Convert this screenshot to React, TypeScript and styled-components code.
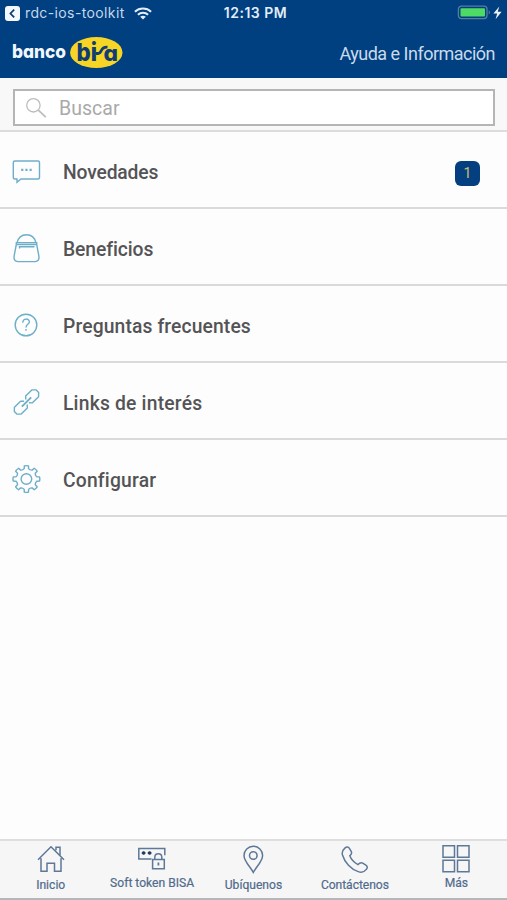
import React from "react";
import styled, { createGlobalStyle } from "styled-components";

const Global = createGlobalStyle`
  * { box-sizing: border-box; }
  body { margin: 0; background: #fdfdfd; font-family: Roboto, sans-serif; }
`;

const Screen = styled.div`
  width: 507px;
  height: 900px;
  display: flex;
  flex-direction: column;
  background: #fdfdfd;
  overflow: hidden;
`;

const Header = styled.header`
  height: 78px;
  background: #003f80;
  color: #e3edf7;
`;

const StatusBar = styled.div`
  height: 26px;
  display: grid;
  grid-template-columns: 1fr auto 1fr;
  align-items: center;
  padding: 0 1px 0 5px;
  font-family: Inter, sans-serif;
  font-size: 14px;
`;

const StatusLeft = styled.div`
  display: flex;
  align-items: center;
  color: #c5d8ea;
  letter-spacing: 0.38px;
`;

const BackApp = styled.span`
  margin: -2px 9px 0 5px;
`;

const Clock = styled.span`
  margin-top: -2px;
  font-weight: 600;
  font-size: 14px;
  letter-spacing: 0.5px;
`;

const StatusRight = styled.div`
  display: flex;
  justify-content: flex-end;
  padding-right: 3px;
`;

const TitleBar = styled.div`
  height: 52px;
  display: flex;
  justify-content: space-between;
  align-items: flex-start;
  padding: 9px 12px 0 12px;
`;

const Title = styled.h1`
  margin: 8px 0 0;
  font-size: 18px;
  line-height: 22px;
  font-weight: 400;
  letter-spacing: -0.51px;
  color: #c9dbeb;
  white-space: nowrap;
`;

const SearchArea = styled.div`
  height: 54px;
  padding: 11px 12px 0 13px;
  background: #f8f8f8;
  border-bottom: 2px solid #dcdcdc;
`;

const SearchField = styled.div`
  height: 37px;
  display: flex;
  align-items: center;
  gap: 11px;
  padding: 1px 0 0 10px;
  border: 2px solid #b5b5b5;
  background: #fff;
  color: #a9a9a9;
  font-size: 19.5px;
  letter-spacing: 0.05px;
`;

const List = styled.ul`
  list-style: none;
  margin: 0;
  padding: 0;
  flex: 1;
`;

const Row = styled.li`
  height: 77px;
  display: flex;
  align-items: center;
  padding: 3px 27px 0 12px;
  border-bottom: 2px solid #dadada;
`;

const RowIcon = styled.span`
  width: 51px;
  height: 30px;
  flex: none;
`;

const RowLabel = styled.span<{ $spacing: number }>`
  flex: 1;
  padding-top: 3px;
  font-size: 19.3px;
  line-height: 24px;
  font-weight: 500;
  letter-spacing: ${(p) => p.$spacing}px;
  color: #545456;
`;

const Badge = styled.span`
  width: 25px;
  height: 25px;
  display: flex;
  align-items: center;
  justify-content: center;
  border-radius: 6px;
  background: #04407f;
  color: #c5c27a;
  font-size: 14px;
  margin-top: 4px;
`;

const TabBar = styled.nav`
  height: 61px;
  flex: none;
  display: grid;
  grid-template-columns: repeat(5, 1fr);
  padding-top: 3px;
  background: #f6f6f6;
  border-top: 2px solid #dedede;
  border-bottom: 2px solid #b5b7b9;
`;

const Tab = styled.div`
  display: flex;
  flex-direction: column;
  align-items: center;
`;

const TabLabel = styled.span<{ $raise?: boolean; $spacing: number }>`
  margin-top: ${(p) => (p.$raise ? 2 : 4)}px;
  font-size: 12.1px;
  line-height: 14px;
  letter-spacing: ${(p) => p.$spacing}px;
  color: #506b8c;
  -webkit-text-stroke: 0.2px #506b8c;
  white-space: nowrap;
`;

const LogoText = styled.text`
  font-family: Inter, sans-serif;
  font-weight: 800;
  font-feature-settings: "cv11";
`;

const Logo = () => (
  <svg width="112" height="34" viewBox="0 0 112 34" aria-label="banco bisa">
    <LogoText x="0" y="23" fill="#f2f7fc" fontSize="18.5" textLength="54" lengthAdjust="spacingAndGlyphs">banco</LogoText>
    <ellipse cx="84.3" cy="17.5" rx="26.2" ry="15.5" fill="#f7d525" />
    <LogoText x="64.5" y="25.5" fill="#103e74" fontSize="25" textLength="20.5" lengthAdjust="spacingAndGlyphs">bi</LogoText>
    <path d="M84 18.5h2.2c2 0 2.2-1.2 3-2.8 1.1-2.5 2.6-3.8 6.3-3.6" fill="none" stroke="#103e74" strokeWidth="2.8" />
    <LogoText x="91.5" y="25.5" fill="#103e74" fontSize="21.5" textLength="14.5" lengthAdjust="spacingAndGlyphs">a</LogoText>
  </svg>
);

const BackIcon = () => (
  <svg width="15" height="15" viewBox="0 0 15 15">
    <rect width="15" height="15" rx="3" fill="#f4f8fc" />
    <path d="M9.2 3.6 5.4 7.5l3.8 3.9" fill="none" stroke="#0b3b70" strokeWidth="1.7" />
  </svg>
);

const Wifi = () => (
  <svg width="18" height="13" viewBox="0 0 18 13" fill="none" stroke="#e3edf7" strokeWidth="2">
    <path d="M.9 4.7c4.6-4.2 11.6-4.2 16.2 0M3.9 7.8c2.9-2.7 7.3-2.7 10.2 0" />
    <path d="M9 12.5 6.2 9.8c1.6-1.4 4-1.4 5.6 0Z" fill="#e3edf7" stroke="none" />
  </svg>
);

const Battery = () => (
  <svg width="46" height="16" viewBox="0 0 46 16">
    <rect x="1.4" y="1.2" width="28.6" height="12.4" rx="3" fill="#003f80" stroke="#577f9d" strokeWidth="1.3" />
    <rect x="3.5" y="3.2" width="24.5" height="8.4" rx="1" fill="#4edb65" />
    <path d="M31.7 5.3c1.7.8 1.7 3.4 0 4.2Z" fill="#577f9d" />
    <path d="m42.3 1.6-5.9 7h3.8l-1.6 5.6 6-7.4h-3.9Z" fill="#edf4fa" />
  </svg>
);

const SearchIcon = () => (
  <svg width="23" height="23" viewBox="0 0 23 23" fill="none" stroke="#bdbdbd" strokeWidth="1.3">
    <circle cx="8.4" cy="8.3" r="6.7" />
    <path d="m13.3 13.2 7.5 7" strokeWidth="1.8" />
  </svg>
);

const gearPath = (() => {
  const points: string[] = [];
  for (let i = 0; i < 8; i++) {
    const at = (r: number, deg: number) => {
      const a = ((i * 45 + deg - 90) * Math.PI) / 180;
      return `${(14.4 + r * Math.cos(a)).toFixed(2)} ${(15 + r * Math.sin(a)).toFixed(2)}`;
    };
    points.push(`${i ? "L" : "M"}${at(10.6, -12)} L${at(13.3, -9)} Q${at(13.7, 0)} ${at(13.3, 9)} L${at(10.6, 12)} Q${at(9.4, 22.5)} ${at(10.6, 33)}`);
  }
  return points.join(" ") + "Z";
})();

const menuIcons = {
  news: (
    <>
      <path d="M3 5h23q1.5 0 1.5 1.5v15q0 1.5-1.5 1.5H9l-4 3.3V23H2.8q-1.5 0-1.5-1.5v-15Q1.3 5 3 5Z" />
      <path d="M9.2 13.8h2.1m2.1 0h2.1m2.1 0h2.1" strokeWidth="2.2" />
    </>
  ),
  benefits: (
    <>
      <path d="M5 10C6.2 4.6 9.7 1.8 14.5 1.8S22.8 4.6 24 10M4.3 9.6h20.4v1.9H4.3Zm0 1.9L2.2 22.5C1.5 26.8 3 28.6 6 28.6h17c3 0 4.5-1.8 3.8-6.1l-2.1-11" />
      <path d="M7.5 15.5v-1.8h15" />
    </>
  ),
  faq: (
    <>
      <circle cx="14" cy="15" r="10.8" />
      <path d="M10.8 12.8c0-5 6.6-4.6 6.6-1 0 2.6-3.4 2.5-3.4 5.6m0 1.5v1.8" />
    </>
  ),
  links: (
    <g transform="translate(14.5 15) rotate(-45)" strokeLinejoin="round">
      <path d="M-1.2-2.2-3.6-4.8h-8.7l-3 2.9v3.8l3 2.9h8.7l2.4-2.6M1.2-2.2l2.4-2.6h8.7l3 2.9v3.8l-3 2.9H3.6L1.2 2.2" />
      <path d="M-6.6 0H6.6" strokeWidth="1.9" />
    </g>
  ),
  settings: (
    <>
      <path d={gearPath} strokeLinejoin="round" />
      <circle cx="14.4" cy="15" r="5.3" />
    </>
  ),
};

const menu: { icon: keyof typeof menuIcons; label: string; spacing: number; count?: number }[] = [
  { icon: "news", label: "Novedades", spacing: -0.15, count: 1 },
  { icon: "benefits", label: "Beneficios", spacing: -0.08 },
  { icon: "faq", label: "Preguntas frecuentes", spacing: 0.12 },
  { icon: "links", label: "Links de interés", spacing: 0.2 },
  { icon: "settings", label: "Configurar", spacing: 0.2 },
];

const tabs = [
  {
    label: "Inicio",
    spacing: 0,
    art: <path d="M2 15.8 15 2.8l13 13M5 14.3v13h6v-8h7.5v8H25v-13M20 6.3v-3h4v8" />,
  },
  {
    label: "Soft token BISA",
    raise: true,
    spacing: 0,
    art: (
      <>
        <path d="M14.5 15H1.8V4.5h26v6.8M17.8 15.5v-2.2c0-4.8 7-4.8 7 0v2.2M15.6 15.5h11.7v9.2H15.6Z" />
        <path d="M4.8 9h3.6M6.6 7.2v3.6M10.8 9h3.6M12.6 7.2v3.6" strokeWidth="2" stroke="#253a60" />
        <path d="M21.4 18.5v3" strokeWidth="1.8" />
      </>
    ),
  },
  {
    label: "Ubíquenos",
    spacing: 0,
    art: (
      <>
        <path d="M15.3 28.4C12.3 22.7 6 17.4 6 11.5a9.3 9.3 0 0 1 18.6 0c0 5.9-6.3 11.2-9.3 16.9Z" />
        <circle cx="15.3" cy="11.5" r="3.8" />
      </>
    ),
  },
  {
    label: "Contáctenos",
    spacing: -0.05,
    art: <path transform="translate(0 1)" d="M5.1 2.9c1.7-1.5 3.2-1.2 4.3.4l1.8 3c1 1.8.3 3.1-1.4 4.5 1.2 3.3 4.5 6.8 8.2 8.8 1.6-1.7 3-2.4 4.7-1.4l3.2 2c1.7 1.1 1.8 2.6.4 4.2-2 2.5-4.7 3.7-8 2.2C11.1 24.4 4.6 17.4 2.4 9.7 1.7 6.9 3 4.7 5.1 2.9Z" />,
  },
  {
    label: "Más",
    raise: true,
    spacing: -0.1,
    art: <path d="M2 1.8h11.5v11.5H2Zm14.5 0H28v11.5H16.5ZM2 16.2h11.5v11.5H2Zm14.5 0H28v11.5H16.5Z" />,
  },
];

export default function App() {
  return (
    <Screen>
      <Global />
      <Header>
        <StatusBar>
          <StatusLeft>
            <BackIcon />
            <BackApp>rdc-ios-toolkit</BackApp>
            <Wifi />
          </StatusLeft>
          <Clock>12:13 PM</Clock>
          <StatusRight><Battery /></StatusRight>
        </StatusBar>
        <TitleBar>
          <Logo />
          <Title>Ayuda e Información</Title>
        </TitleBar>
      </Header>
      <SearchArea>
        <SearchField>
          <SearchIcon />
          <span>Buscar</span>
        </SearchField>
      </SearchArea>
      <List>
        {menu.map((item) => (
          <Row key={item.icon}>
            <RowIcon>
              <svg width="30" height="30" viewBox="0 0 30 30" fill="none" stroke="#6daec8" strokeWidth="1.4">
                {menuIcons[item.icon]}
              </svg>
            </RowIcon>
            <RowLabel $spacing={item.spacing}>{item.label}</RowLabel>
            {item.count && <Badge>{item.count}</Badge>}
          </Row>
        ))}
      </List>
      <TabBar>
        {tabs.map((tab) => (
          <Tab key={tab.label}>
            <svg width="30" height="30" viewBox="0 0 30 30" fill="none" stroke="#5d7898" strokeWidth="1.5">
              {tab.art}
            </svg>
            <TabLabel $raise={tab.raise} $spacing={tab.spacing}>{tab.label}</TabLabel>
          </Tab>
        ))}
      </TabBar>
    </Screen>
  );
}
